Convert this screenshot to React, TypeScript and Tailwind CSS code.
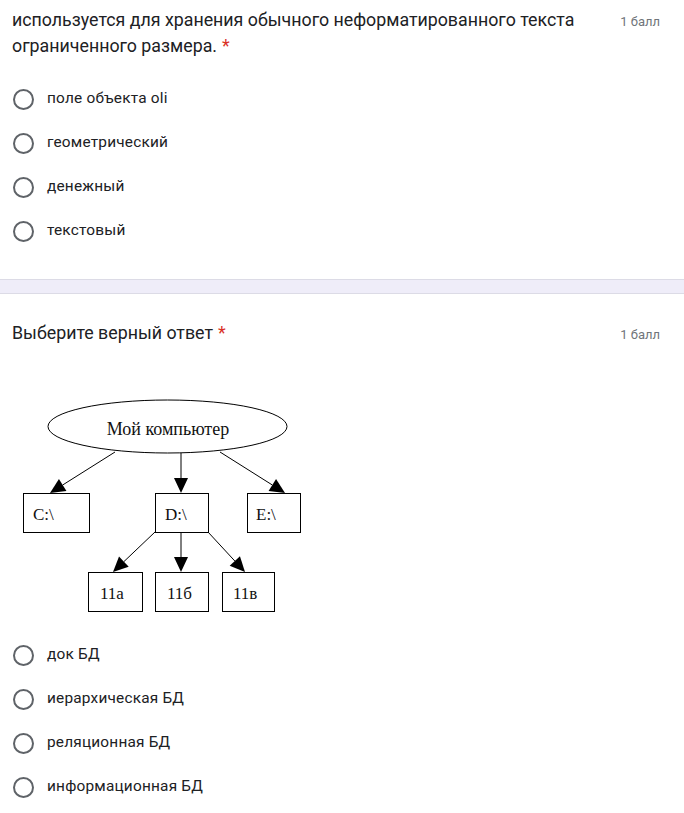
import type { ReactNode } from "react";

const FONT = { fontFamily: "Roboto, Arial, sans-serif" };

function Radio({ label }: { label: string }) {
  return (
    <div className="flex items-center h-[44px]">
      <span className="w-[21px] h-[21px] rounded-full border-2 border-[#5f6368] shrink-0 ml-[1px]" />
      <span className="ml-[13px] text-[15.4px] tracking-[0.2px] text-[#202124]">{label}</span>
    </div>
  );
}

function Title({ children }: { children: ReactNode }) {
  return (
    <div className="flex items-start">
      <div className="flex-1 text-[17.8px] leading-[26px] text-[#202124]">
        {children}
        <span className="ml-[5px] text-[#d93025]">*</span>
      </div>
      <div className="ml-6 mr-[12px] relative top-[2px] text-[13px] leading-[26px] text-[#70757a] shrink-0">
        1 балл
      </div>
    </div>
  );
}

function Arrow({ x1, y1, x2, y2 }: { x1: number; y1: number; x2: number; y2: number }) {
  const dx = x2 - x1;
  const dy = y2 - y1;
  const len = Math.hypot(dx, dy);
  const ux = dx / len;
  const uy = dy / len;
  const hl = 15;
  const hw = 7;
  const bx = x2 - ux * hl;
  const by = y2 - uy * hl;
  const pts = `${x2},${y2} ${bx - uy * hw},${by + ux * hw} ${bx + uy * hw},${by - ux * hw}`;
  return (
    <g>
      <line x1={x1} y1={y1} x2={bx} y2={by} stroke="#000" strokeWidth="1" />
      <polygon points={pts} fill="#000" />
    </g>
  );
}

function Tree() {
  const boxes = [
    { x: 11, y: 103, w: 66, label: "C:\\", tx: 21 },
    { x: 143, y: 103, w: 53, label: "D:\\", tx: 153 },
    { x: 235, y: 103, w: 53, label: "E:\\", tx: 244 },
    { x: 76, y: 182, w: 54, label: "11а", tx: 88 },
    { x: 143, y: 182, w: 53, label: "11б", tx: 155 },
    { x: 210, y: 182, w: 52, label: "11в", tx: 221 },
  ];
  return (
    <svg width="300" height="230" viewBox="0 0 300 230" className="block">
      <ellipse cx="155.5" cy="36.5" rx="119.5" ry="26.5" fill="#fff" stroke="#000" strokeWidth="1" />
      <text
        x="156"
        y="45"
        textAnchor="middle"
        fontSize="18"
        fill="#111"
        style={{ fontFamily: "'Liberation Serif', serif" }}
      >
        Мой компьютер
      </text>
      <Arrow x1={103} y1={62} x2={38} y2={103} />
      <Arrow x1={169} y1={63} x2={169} y2={103} />
      <Arrow x1={208} y1={62} x2={273} y2={103} />
      <Arrow x1={143} y1={142} x2={101} y2={182} />
      <Arrow x1={169} y1={142} x2={169} y2={182} />
      <Arrow x1={196} y1={142} x2={233} y2={182} />
      {boxes.map((b) => (
        <g key={b.label}>
          <rect x={b.x + 0.5} y={b.y + 0.5} width={b.w} height={39} fill="#fff" stroke="#000" strokeWidth="1" />
          <text
            x={b.tx}
            y={b.y + 27}
            fontSize="17"
            fill="#111"
            style={{ fontFamily: "'Liberation Serif', serif" }}
          >
            {b.label}
          </text>
        </g>
      ))}
    </svg>
  );
}

export default function App() {
  return (
    <div className="w-[684px] min-h-[813px] bg-white" style={FONT}>
      <div className="px-3 pt-[7px] pb-[26px]">
        <Title>используется для хранения обычного неформатированного текста ограниченного размера.</Title>
        <div className="mt-[18px]">
          {["поле объекта oli", "геометрический", "денежный", "текстовый"].map((o) => (
            <Radio key={o} label={o} />
          ))}
        </div>
      </div>

      <div className="h-[15px] bg-[#efedf9] border-y border-[#dcdbe6]" />

      <div className="px-3 pt-[26px] pb-4">
        <Title>Выберите верный ответ</Title>
        <div className="mt-[44px]">
          <Tree />
        </div>
        <div className="mt-[13px]">
          {["док БД", "иерархическая БД", "реляционная БД", "информационная БД"].map((o) => (
            <Radio key={o} label={o} />
          ))}
        </div>
      </div>
    </div>
  );
}
